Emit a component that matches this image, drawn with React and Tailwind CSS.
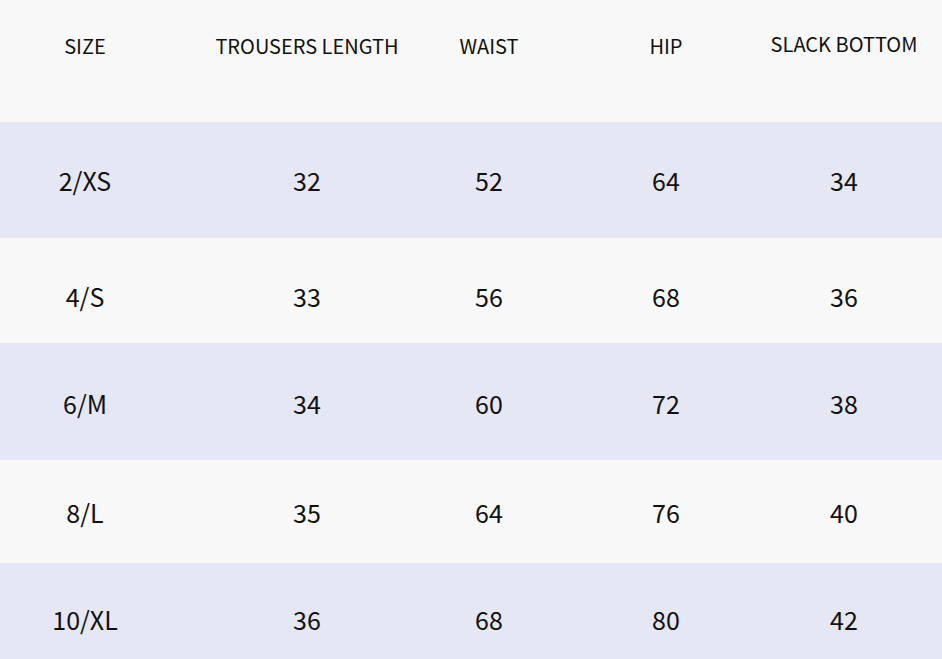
const headers = ["SIZE", "TROUSERS LENGTH", "WAIST", "HIP", "SLACK BOTTOM"];

const rows = [
  { cells: ["2/XS", "32", "52", "64", "34"], bg: "bg-[#e5e7f4]", cls: "h-[116px] pt-[2px]" },
  { cells: ["4/S", "33", "56", "68", "36"], bg: "bg-[#f8f8f8]", cls: "h-[105px] pt-[13px]" },
  { cells: ["6/M", "34", "60", "72", "38"], bg: "bg-[#e5e7f4]", cls: "h-[117px] pt-[4px]" },
  { cells: ["8/L", "35", "64", "76", "40"], bg: "bg-[#f8f8f8]", cls: "h-[103px] pt-[2px]" },
  { cells: ["10/XL", "36", "68", "80", "42"], bg: "bg-[#e5e7f4]", cls: "h-[96px] pt-[18px]" },
];

const grid = "grid grid-cols-[170px_274px_90px_264px_92px_1fr]";

export default function App() {
  return (
    <div
      className="w-[942px] h-[659px] overflow-hidden bg-[#f8f8f8] text-[#111]"
      style={{ fontFamily: '"Noto Sans CJK SC", "Noto Sans", sans-serif' }}
    >
      {/* HEADER */}
      <div className={`${grid} h-[122px] pt-[32px] items-start text-[20px] leading-[28px]`}>
        {headers.map((h, i) => (
          <div key={h} className={`flex justify-center whitespace-nowrap ${i === 4 ? "-mt-[2px]" : ""}`}>
            {h}
          </div>
        ))}
      </div>

      {/* ROWS */}
      {rows.map((r) => (
        <div key={r.cells[0]} className={`${grid} ${r.bg} ${r.cls} items-center text-[25px]`}>
          {r.cells.map((c, i) => (
            <div key={i} className="flex justify-center whitespace-nowrap">
              {c}
            </div>
          ))}
        </div>
      ))}
    </div>
  );
}
